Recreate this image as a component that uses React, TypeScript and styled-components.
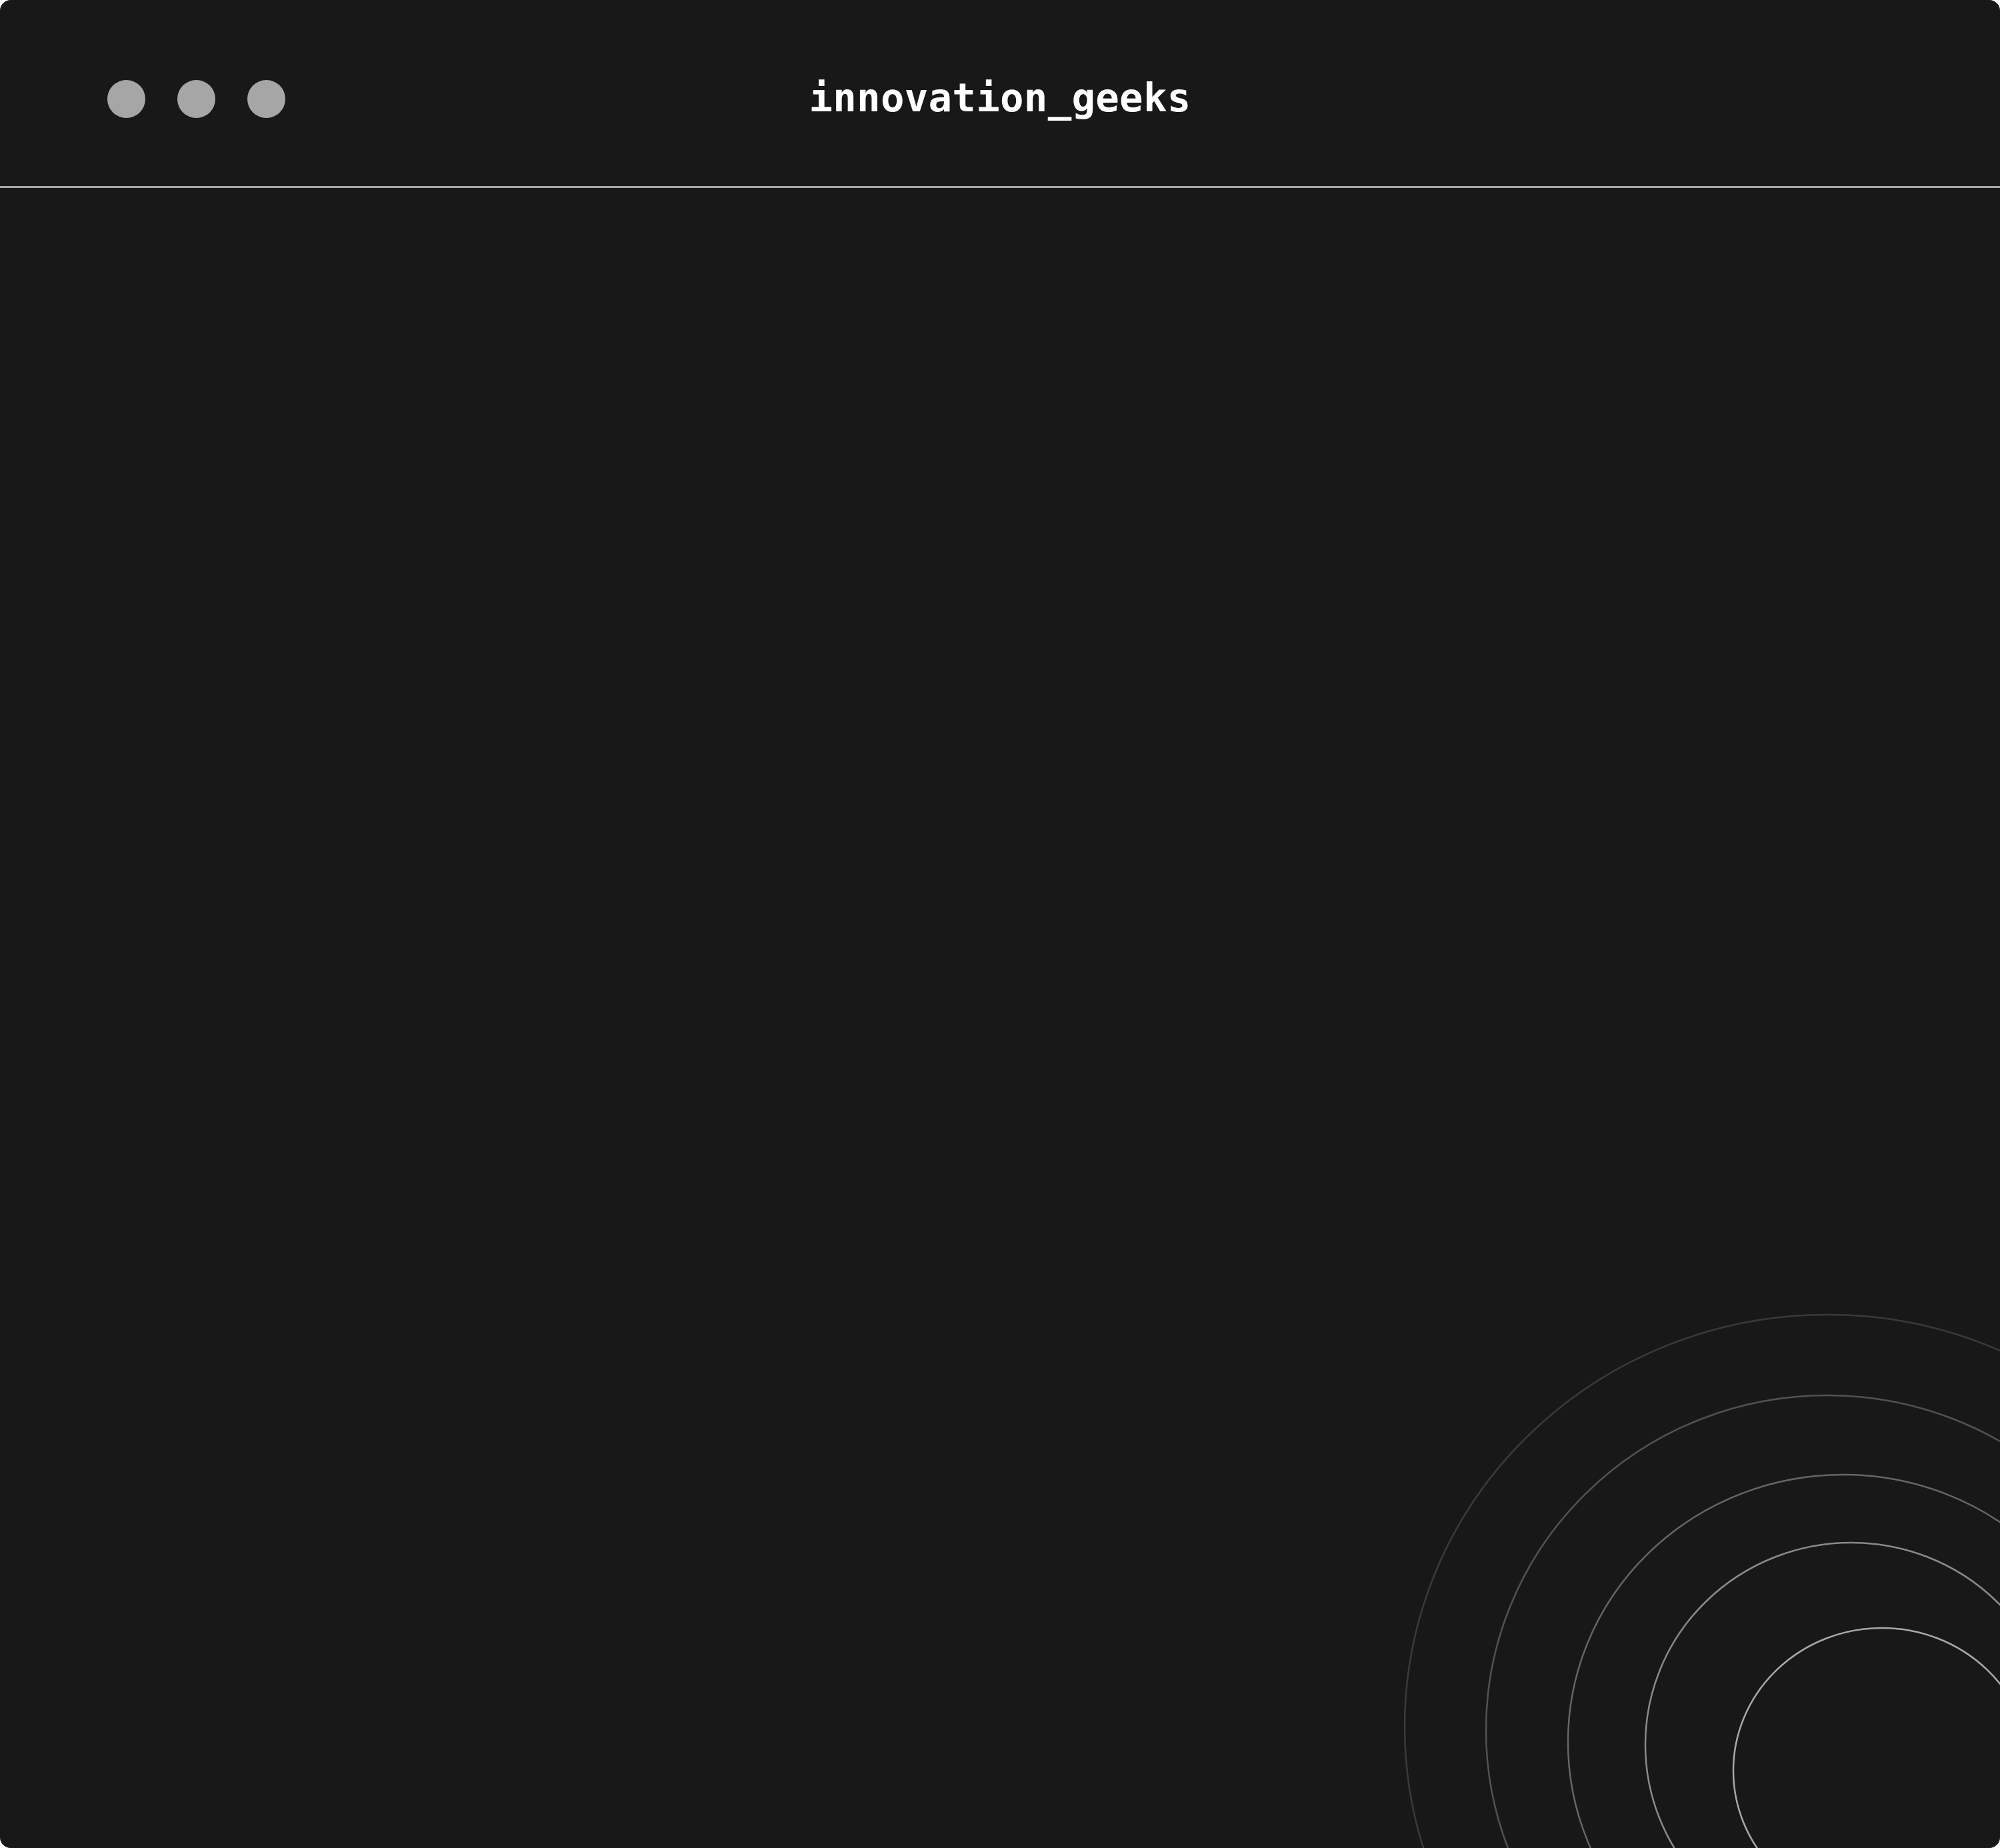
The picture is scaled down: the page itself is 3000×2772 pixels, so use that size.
import React from 'react'
import styled, { createGlobalStyle } from 'styled-components'

const GlobalStyle = createGlobalStyle`
  html, body {
    margin: 0;
    padding: 0;
    background: #ffffff;
  }
`

const Window = styled.div`
  position: relative;
  width: 3000px;
  height: 2772px;
  background: #181818;
  border-radius: 16px;
  overflow: hidden;
  display: flex;
  flex-direction: column;
`

const TitleBar = styled.header`
  height: 279px;
  flex-shrink: 0;
  display: grid;
  grid-template-columns: 1fr auto 1fr;
  align-items: center;
  padding: 0 161px;
  border-bottom: 3px solid #a6a6a6;
`

const Dots = styled.div`
  display: flex;
  gap: 48px;
  margin-top: 18px;
`

const Dot = styled.span`
  width: 57px;
  height: 57px;
  border-radius: 50%;
  background: #a6a6a6;
`

const Title = styled.h1`
  margin: 0;
  margin-top: 14px;
  font-family: 'DejaVu Sans Mono', 'Liberation Mono', monospace;
  font-weight: 700;
  font-size: 59px;
  color: #ffffff;
  letter-spacing: 0.3px;
`

const Body = styled.main`
  position: relative;
  flex: 1;
`

const Rings = styled.svg`
  position: absolute;
  right: 0;
  bottom: 0;
`

// rings, in page coordinates (cx, cy, rx, ry, stroke colour)
const rings = [
  { cx: 2741, cy: 2590, rx: 634, ry: 618, color: '#3a3a3a' },
  { cx: 2741, cy: 2595, rx: 512, ry: 502, color: '#525252' },
  { cx: 2765, cy: 2613, rx: 413, ry: 401, color: '#666666' },
  { cx: 2777, cy: 2617, rx: 309, ry: 303, color: '#8a8a8a' },
  { cx: 2823, cy: 2656, rx: 223, ry: 214, color: '#a8a8a8' },
]

const App: React.FC = () => {
  return (
    <>
      <GlobalStyle />
      <Window>
        <TitleBar>
          <Dots>
            <Dot />
            <Dot />
            <Dot />
          </Dots>
          <Title>innovation_geeks</Title>
          <div />
        </TitleBar>

        <Body>
          <Rings width="1000" height="900" viewBox="2000 1872 1000 900" fill="none">
            {rings.map((r, i) => (
              <ellipse key={i} cx={r.cx} cy={r.cy} rx={r.rx} ry={r.ry} stroke={r.color} strokeWidth={2.5} />
            ))}
          </Rings>
        </Body>
      </Window>
    </>
  )
}

export default App
